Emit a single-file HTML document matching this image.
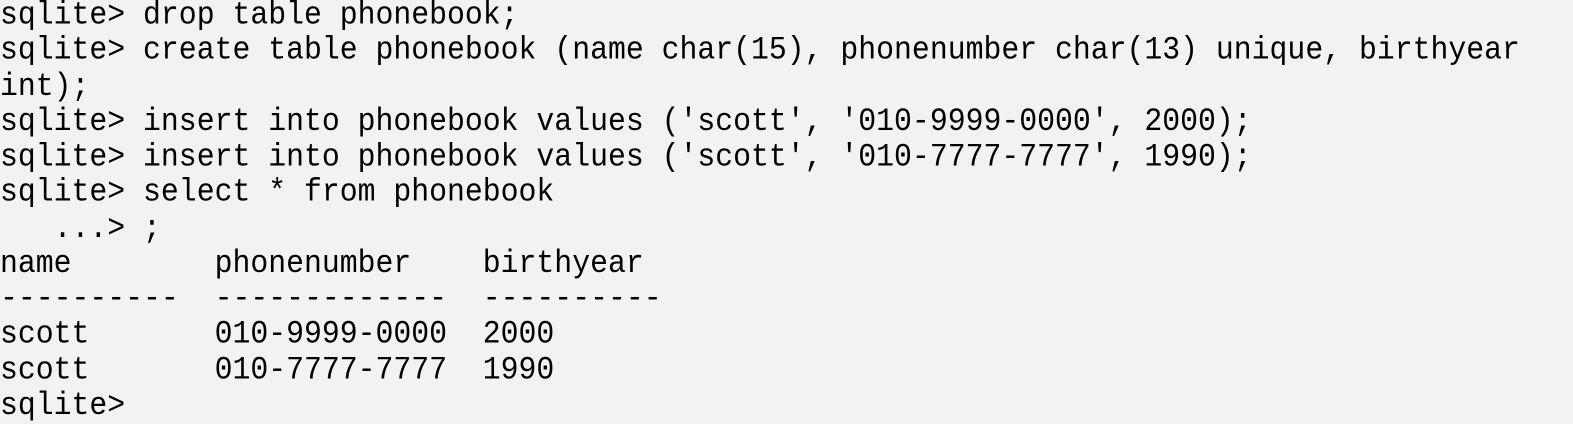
<!DOCTYPE html>
<html><head><meta charset="utf-8"><style>
html,body{margin:0;padding:0;background:#f2f2f2;width:1573px;height:416px;overflow:hidden}
pre{margin:0;position:absolute;left:0;top:-3px;font-family:"Liberation Mono","Noto Sans CJK KR",monospace;font-size:29.8px;line-height:32.27px;color:#000;white-space:pre;transform:scaleY(1.1);transform-origin:0 0}
</style></head><body><pre>sqlite&gt; drop table phonebook;
sqlite&gt; create table phonebook (name char(15), phonenumber char(13) unique, birthyear
int);
sqlite&gt; insert into phonebook values ('scott', '010-9999-0000', 2000);
sqlite&gt; insert into phonebook values ('scott', '010-7777-7777', 1990);
sqlite&gt; select * from phonebook
   ...&gt; ;
name        phonenumber    birthyear
----------  -------------  ----------
scott       010-9999-0000  2000
scott       010-7777-7777  1990
sqlite&gt;</pre></body></html>
